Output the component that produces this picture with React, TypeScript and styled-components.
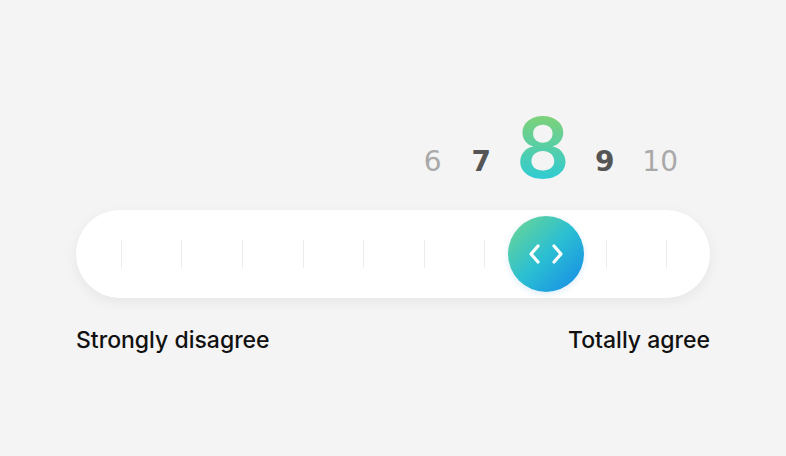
import styled, { createGlobalStyle } from 'styled-components';

const GlobalStyle = createGlobalStyle`
  html, body {
    margin: 0;
    padding: 0;
    background: #f4f4f4;
  }
  body {
    font-family: Inter, "Noto Sans", sans-serif;
  }
`;

const values = [
  { v: 6, gap: 0 },
  { v: 7, gap: 30 },
  { v: 8, gap: 25 },
  { v: 9, gap: 25 },
  { v: 10, gap: 28 },
];
const selected = 8;
const tickCount = 10;
const knobIndex = 7;

export default function App() {
  return (
    <Page>
      <GlobalStyle />
      <Scale>
        <Numbers>
          {values.map(({ v, gap }) => (
            <Number key={v} $dist={Math.abs(v - selected)} $gap={gap}>
              {v}
            </Number>
          ))}
        </Numbers>
        <Track>
          {Array.from({ length: tickCount }).map((_, i) => (
            <Cell key={i}>
              {i === knobIndex ? (
                <Knob>
                  <svg width="36" height="20" viewBox="0 0 36 20" fill="none">
                    <path d="M10 2 L3 10 L10 18" stroke="#fff" strokeWidth="3.2" strokeLinecap="round" strokeLinejoin="round" />
                    <path d="M26 2 L33 10 L26 18" stroke="#fff" strokeWidth="3.2" strokeLinecap="round" strokeLinejoin="round" />
                  </svg>
                </Knob>
              ) : (
                <Tick />
              )}
            </Cell>
          ))}
        </Track>
        <Labels>
          <Label>Strongly disagree</Label>
          <Label>Totally agree</Label>
        </Labels>
      </Scale>
    </Page>
  );
}

const Page = styled.div`
  width: 786px;
  height: 456px;
  display: flex;
  justify-content: center;
  box-sizing: border-box;
  padding-top: 108px;
`;

const Scale = styled.div`
  width: 634px;
  display: flex;
  flex-direction: column;
`;

const Numbers = styled.div`
  display: flex;
  justify-content: flex-end;
  align-items: flex-end;
  padding-right: 32px;
  height: 80px;
`;

const Number = styled.div<{ $dist: number; $gap: number }>`
  font-family: ${({ $dist }) => ($dist === 0 ? 'Inter, sans-serif' : '"DejaVu Sans", sans-serif')};
  line-height: 1;
  font-weight: ${({ $dist }) => ($dist === 0 ? 600 : $dist === 1 ? 700 : 400)};
  font-size: ${({ $dist }) => ($dist === 0 ? '84px' : '28px')};
  margin-bottom: ${({ $dist }) => ($dist === 0 ? '-2px' : '12px')};
  margin-left: ${({ $gap }) => $gap}px;
  color: ${({ $dist }) => ($dist === 1 ? '#555555' : '#a9a9a9')};
  ${({ $dist }) =>
    $dist === 0 &&
    `
    background: linear-gradient(180deg, #80d276 10%, #2ccbd8 90%);
    -webkit-background-clip: text;
    background-clip: text;
    color: transparent;
  `}
`;

const Track = styled.div`
  margin-top: 22px;
  height: 88px;
  border-radius: 44px;
  background: #ffffff;
  box-shadow: 0 4px 14px rgba(0, 0, 0, 0.06);
  display: grid;
  grid-template-columns: repeat(10, minmax(0, 1fr));
  padding: 0 13px 0 15px;
  box-sizing: border-box;
`;

const Cell = styled.div`
  display: flex;
  align-items: center;
  justify-content: center;
`;

const Tick = styled.div`
  width: 1px;
  height: 28px;
  background: #ececec;
`;

const Knob = styled.div`
  width: 76px;
  height: 76px;
  flex-shrink: 0;
  border-radius: 50%;
  background: linear-gradient(135deg, #72d88e 0%, #2bbfd2 50%, #1589e8 100%);
  display: flex;
  align-items: center;
  justify-content: center;
  box-shadow: 0 2px 6px rgba(20, 120, 200, 0.15);
`;

const Labels = styled.div`
  display: flex;
  justify-content: space-between;
  margin-top: 28px;
`;

const Label = styled.div`
  font-family: Inter, sans-serif;
  font-size: 23px;
  font-weight: 500;
  color: #111111;
`;
